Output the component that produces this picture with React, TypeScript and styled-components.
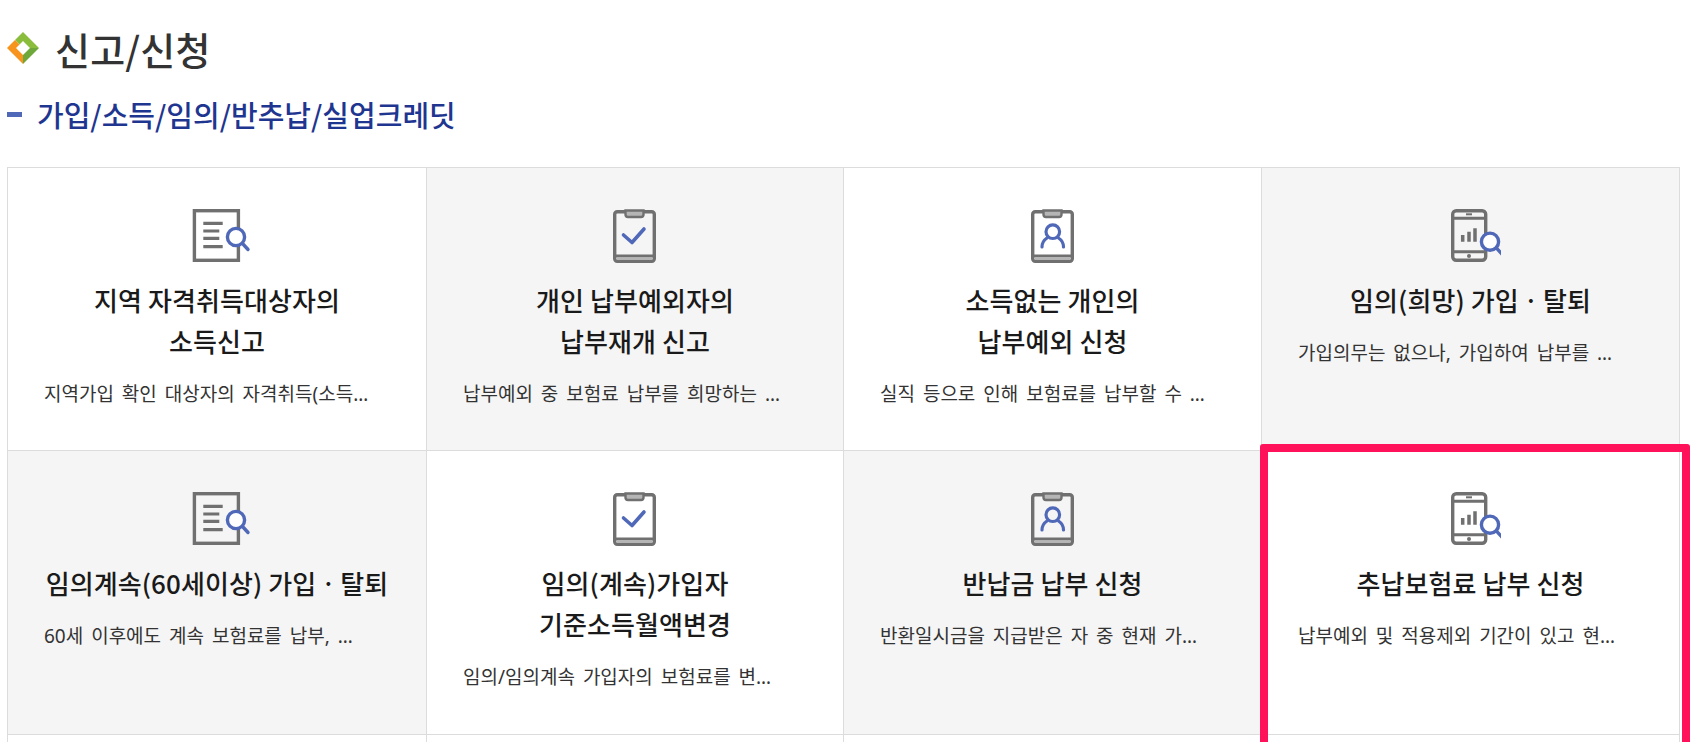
import React from 'react';
import styled, { createGlobalStyle } from 'styled-components';

const GlobalStyle = createGlobalStyle`
  html, body {
    margin: 0;
    padding: 0;
    height: 742px;
    overflow: hidden;
    background: #ffffff;
    font-family: "Noto Sans CJK KR", "Noto Sans", sans-serif;
  }
`;

const Page = styled.div`
  position: relative;
  height: 742px;
  overflow: hidden;
  padding: 22px 10px 0 7px;
`;

const PageTitle = styled.h2`
  display: flex;
  align-items: center;
  gap: 16px;
  margin: 0;
  height: 52px;
  font-size: 38px;
  font-weight: 500;
  letter-spacing: 0.2px;
  color: #333333;
`;

const SectionTitle = styled.h3`
  display: flex;
  align-items: center;
  gap: 15px;
  margin: 17px 0 0;
  height: 46px;
  font-size: 29px;
  font-weight: 500;
  color: #1f3691;
`;

const Dash = styled.span`
  width: 15px;
  height: 5px;
  background: #5068b8;
`;

const Grid = styled.ul`
  display: grid;
  grid-template-columns: 419px 417px 418px minmax(0, 1fr);
  grid-template-rows: 283px 284px 284px;
  margin: 30px 0 0;
  padding: 0;
  list-style: none;
  border-top: 1px solid #dcdcdc;
  border-left: 1px solid #dcdcdc;
`;

const Cell = styled.li<{ $shaded?: boolean }>`
  box-sizing: border-box;
  min-width: 0;
  padding: 41px 36px 0;
  text-align: center;
  background: ${(p) => (p.$shaded ? '#f5f5f5' : '#ffffff')};
  border-right: 1px solid #dcdcdc;
  border-bottom: 1px solid #dcdcdc;
`;

const IconBox = styled.div`
  display: flex;
  justify-content: center;
  height: 54px;
  margin-bottom: 16px;
`;

const CellTitle = styled.div`
  font-size: 26px;
  font-weight: 500;
  line-height: 41px;
  letter-spacing: 0.1px;
  color: #1a1a1a;
`;

const CellText = styled.p`
  margin: 20px 20px 0 0;
  font-family: "Noto Sans", "Noto Sans CJK KR", sans-serif;
  font-size: 19px;
  line-height: 26px;
  word-spacing: 3px;
  color: #333333;
  text-align: left;
  white-space: nowrap;
  overflow: hidden;
  text-overflow: ellipsis;
`;

const Highlight = styled.div`
  position: absolute;
  left: 1260px;
  top: 444px;
  width: 430px;
  height: 320px;
  box-sizing: border-box;
  border: 8px solid #ff1259;
  border-radius: 3px;
  pointer-events: none;
`;

const GREY = '#707070';
const BLUE = '#5068b8';

function Lens({ cx, cy }: { cx: number; cy: number }) {
  return (
    <>
      <circle cx={cx} cy={cy} r={8.6} fill="#ffffff" stroke={BLUE} strokeWidth={3.4} />
      <path d={`M${cx + 6.5} ${cy + 6.5}l5.5 6`} stroke={BLUE} strokeWidth={3.4} strokeLinecap="round" />
    </>
  );
}

function DocSearchIcon() {
  return (
    <svg width="70" height="54" viewBox="0 0 70 54" fill="none">
      <rect x="12.4" y="1.7" width="44" height="49.6" stroke={GREY} strokeWidth={3.4} />
      <path d="M21.3 14.3h19.4M21.3 22h16M21.3 29.3h16M21.3 37.7h19.4" stroke={GREY} strokeWidth={3.2} />
      <Lens cx={54} cy={28} />
    </svg>
  );
}

function Board({ children }: { children: React.ReactNode }) {
  return (
    <svg width="44" height="54" viewBox="0 0 44 54" fill="none">
      <rect x="1.7" y="2.7" width="39.6" height="49.6" rx="2.5" stroke={GREY} strokeWidth={3.4} />
      <path d="M12.5 1.5h18v4a2.5 2.5 0 0 1-2.5 2.5h-13a2.5 2.5 0 0 1-2.5-2.5z" fill="#b5b5b5" stroke={GREY} strokeWidth={2.4} />
      <path d="M2 47h39" stroke={GREY} strokeWidth={3} />
      <path d="M3.5 49.7h36" stroke="#b5b5b5" strokeWidth={2} />
      {children}
    </svg>
  );
}

function CheckIcon() {
  return (
    <Board>
      <path d="M10.5 26l8.5 7.5L31 20" stroke={BLUE} strokeWidth={3.6} strokeLinecap="round" strokeLinejoin="round" />
    </Board>
  );
}

function PersonIcon() {
  return (
    <Board>
      <circle cx="21.8" cy="22.7" r="6.8" stroke={BLUE} strokeWidth={3.2} />
      <path d="M11 38c0-4 2-7 5-9M32.5 38c0-4-2-7-5-9" stroke={BLUE} strokeWidth={3.2} strokeLinecap="round" />
    </Board>
  );
}

function PhoneIcon() {
  return (
    <svg width="60" height="54" viewBox="0 0 60 54" fill="none">
      <rect x="11.7" y="1.7" width="33" height="49.6" rx="3.5" stroke={GREY} strokeWidth={3.4} />
      <path d="M11.7 9.3h33M11.7 42.7h33" stroke={GREY} strokeWidth={3} />
      <path d="M25 5.3h6" stroke={GREY} strokeWidth={2} />
      <circle cx="28" cy="46.9" r="2" fill={GREY} />
      <path d="M21.7 32.7V26M28 32.7V22.7M34 32.7V19.3" stroke={GREY} strokeWidth={3.5} />
      <Lens cx={49} cy={32.7} />
    </svg>
  );
}

type Service = {
  icon: React.ReactNode;
  title: string[];
  text: string;
  shaded?: boolean;
};

const services: Service[] = [
  { icon: <DocSearchIcon />, title: ['지역 자격취득대상자의', '소득신고'], text: '지역가입 확인 대상자의 자격취득(소득신고)을 신고합니다' },
  { icon: <CheckIcon />, title: ['개인 납부예외자의', '납부재개 신고'], text: '납부예외 중 보험료 납부를 희망하는 경우 신고합니다', shaded: true },
  { icon: <PersonIcon />, title: ['소득없는 개인의', '납부예외 신청'], text: '실직 등으로 인해 보험료를 납부할 수 없는 경우 신청합니다' },
  { icon: <PhoneIcon />, title: ['임의(희망) 가입ㆍ탈퇴'], text: '가입의무는 없으나, 가입하여 납부를 희망하는 경우', shaded: true },
  { icon: <DocSearchIcon />, title: ['임의계속(60세이상) 가입ㆍ탈퇴'], text: '60세 이후에도 계속 보험료를 납부, 연금을 받고자 하는 경우', shaded: true },
  { icon: <CheckIcon />, title: ['임의(계속)가입자', '기준소득월액변경'], text: '임의/임의계속 가입자의 보험료를 변경하고자 하는 경우' },
  { icon: <PersonIcon />, title: ['반납금 납부 신청'], text: '반환일시금을 지급받은 자 중 현재 가입 중인 경우', shaded: true },
  { icon: <PhoneIcon />, title: ['추납보험료 납부 신청'], text: '납부예외 및 적용제외 기간이 있고 현재 납부 중인 경우' },
];

export default function App() {
  return (
    <Page>
      <GlobalStyle />
      <PageTitle>
        <svg width="32" height="32" viewBox="0 0 32 32">
          <path d="M8 8L16 0L32 16H23L16 9L12.5 12.5z" fill="#8bbd3c" />
          <path d="M0 16L8 8L12.5 12.5L9 16L16 23V32z" fill="#f7941d" />
          <path d="M16 32L32 16H23L16 23z" fill="#6fa83a" />
        </svg>
        신고/신청
      </PageTitle>
      <SectionTitle>
        <Dash />
        가입/소득/임의/반추납/실업크레딧
      </SectionTitle>
      <Grid>
        {services.map((s, i) => (
          <Cell key={i} $shaded={s.shaded}>
            <IconBox>{s.icon}</IconBox>
            {s.title.map((line) => (
              <CellTitle key={line}>{line}</CellTitle>
            ))}
            <CellText>{s.text}</CellText>
          </Cell>
        ))}
        <Cell />
        <Cell />
        <Cell />
        <Cell />
      </Grid>
      <Highlight />
    </Page>
  );
}
